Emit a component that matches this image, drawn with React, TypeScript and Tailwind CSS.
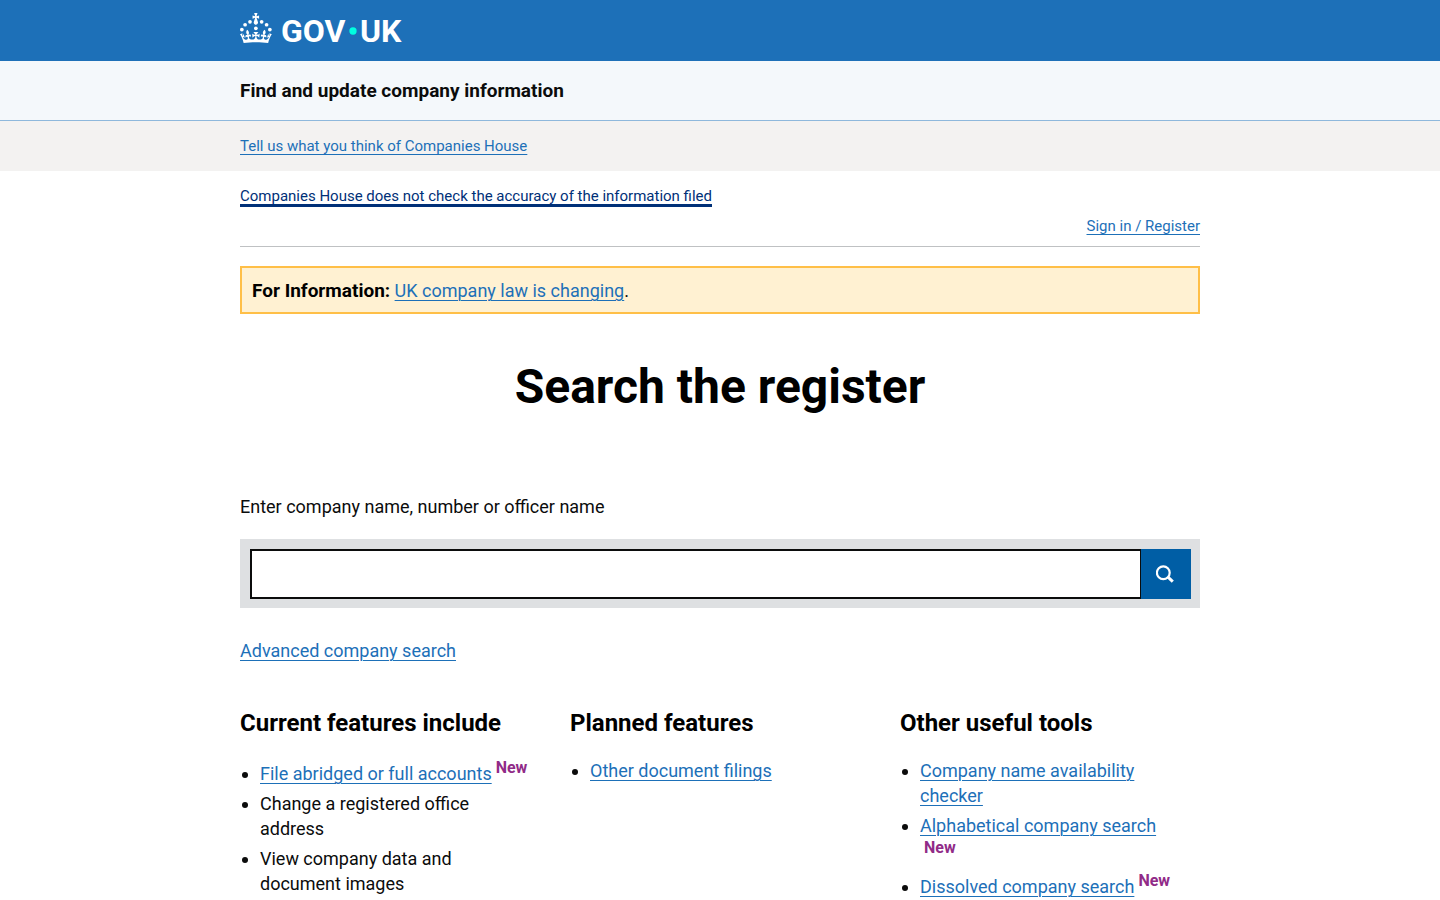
import { useState, type ReactNode } from 'react';

const linkClass = 'text-[#1d70b8] underline decoration-1 underline-offset-3';

const Logo = () => (
  <svg viewBox="0 0 324 60" className="h-[30px] w-[162px] overflow-visible" role="img" aria-label="GOV.UK" fill="white">
    <circle cx="20" cy="17.6" r="3.7" />
    <circle cx="10.2" cy="23.5" r="3.7" />
    <circle cx="3.7" cy="33.2" r="3.7" />
    <circle cx="31.7" cy="30.6" r="3.7" />
    <circle cx="43.3" cy="17.6" r="3.7" />
    <circle cx="53.2" cy="23.5" r="3.7" />
    <circle cx="59.7" cy="33.2" r="3.7" />
    <path d="M33.1,9.8c.2-.1.3-.3.5-.5l4.6,2.4v-6.8l-4.6,1.5c-.1-.2-.3-.3-.5-.5l1.9-5.9h-6.7l1.9,5.9c-.2.1-.3.3-.5.5l-4.6-1.5v6.8l4.6-2.4c.1.2.3.3.5.5l-2.6,8c-.9,2.8,1.2,5.7,4.1,5.7h0c3,0,5.1-2.9,4.1-5.7l-2.6-8ZM37,37.9s-3.4,3.8-4.1,6.1c2.2,0,4.2-.5,6.4-2.8l-.7,8.5c-2-2.8-4.4-4.1-5.7-3.8.1,3.1.5,6.7,5.8,7.2,3.7.3,6.7-1.5,7-3.8.4-2.6-2-4.3-3.7-1.6-1.4-4.5,2.4-6.1,4.9-3.2-1.9-4.5-1.8-7.7,2.4-10.9,3,4,2.6,7.3-1.2,11.1,2.4-1.3,6.2,0,4,4.6-1.2-2.8-3.7-2.2-4.2.2-.3,1.7.7,3.7,3,4.2,1.9.3,4.7-.9,7-5.9-1.3,0-2.4.7-3.9,1.7l2.4-8c.6,2.3,1.4,3.7,2.2,4.5.6-1.6.5-2.8,0-5.3l5,1.8c-2.6,3.6-5.2,8.7-7.3,17.5-7.4-1.1-15.7-1.7-24.5-1.7h0c-8.8,0-17.1.6-24.5,1.7-2.1-8.9-4.7-13.9-7.3-17.5l5-1.8c-.5,2.5-.6,3.7,0,5.3.8-.8,1.6-2.3,2.2-4.5l2.4,8c-1.5-1-2.6-1.7-3.9-1.7,2.3,5,5.2,6.2,7,5.9,2.3-.4,3.3-2.4,3-4.2-.5-2.4-3-3.1-4.2-.2-2.2-4.6,1.6-6,4-4.6-3.7-3.7-4.2-7.1-1.2-11.1,4.2,3.2,4.3,6.4,2.4,10.9,2.5-2.8,6.3-1.3,4.9,3.2-1.8-2.7-4.1-1-3.7,1.6.3,2.3,3.3,4.1,7,3.8,5.4-.5,5.7-4.2,5.8-7.2-1.3-.2-3.7,1-5.7,3.8l-.7-8.5c2.2,2.3,4.2,2.7,6.4,2.8-.7-2.3-4.1-6.1-4.1-6.1h10.6Z" />
    <text x="82" y="58" fontSize="64" fontWeight="700">GOV</text>
    <circle cx="226" cy="36" r="7.3" fill="#00ffe0" />
    <text x="240" y="58" fontSize="64" fontWeight="700">UK</text>
  </svg>
);

const SearchIcon = () => (
  <svg viewBox="0 0 20 20" className="h-5 w-5" fill="none" stroke="white" aria-hidden="true">
    <circle cx="7.3" cy="8.8" r="6.4" strokeWidth="2.2" />
    <path d="M12 13.2L16.8 17.6" strokeWidth="3" />
  </svg>
);

const Container = ({ children }: { children: ReactNode }) => (
  <div className="mx-4 max-w-[960px] sm:mx-8 lg:mx-auto">{children}</div>
);

const NewFlag = () => (
  <span className="mr-1.5 ml-1 inline-block align-[7px] text-base leading-[19px] font-bold text-[#912b88]">New</span>
);

type Feature = {
  label: string;
  linked?: boolean;
  isNew?: boolean;
};

const columns: { title: string; items: Feature[] }[] = [
  {
    title: 'Current features include',
    items: [
      { label: 'File abridged or full accounts', linked: true, isNew: true },
      { label: 'Change a registered office address' },
      { label: 'View company data and document images' },
    ],
  },
  {
    title: 'Planned features',
    items: [{ label: 'Other document filings', linked: true }],
  },
  {
    title: 'Other useful tools',
    items: [
      { label: 'Company name availability checker', linked: true },
      { label: 'Alphabetical company search', linked: true, isNew: true },
      { label: 'Dissolved company search', linked: true, isNew: true },
    ],
  },
];

const FeatureColumn = ({ title, items }: { title: string; items: Feature[] }) => (
  <section>
    <h2 className="mb-5 text-2xl leading-[30px] font-bold text-black">{title}</h2>
    <ul className="list-disc pr-[5px] pl-5">
      {items.map(item => (
        <li key={item.label} className="mb-[5px]">
          {item.linked ? <a href="#" className={linkClass}>{item.label}</a> : item.label}
          {item.isNew && <NewFlag />}
        </li>
      ))}
    </ul>
  </section>
);

export default function App() {
  const [query, setQuery] = useState('');

  return (
    <div className="bg-white font-[Roboto,'Liberation_Sans',sans-serif] text-lg leading-[25px] text-[#0b0c0c]">
      <header>
        <div className="bg-[#1d70b8] pt-[13px] pb-[18px]">
          <Container>
            <a href="#" className="block w-fit"><Logo /></a>
          </Container>
        </div>
        <div className="border-b border-[#8eb8dc] bg-[#f4f8fb] py-[17px]">
          <Container>
            <span className="block text-[19px] leading-[25px] font-bold">Find and update company information</span>
          </Container>
        </div>
      </header>

      <div className="bg-[#f3f2f1] py-[15px] text-[15px] leading-5">
        <Container>
          <a href="#" className={linkClass}>Tell us what you think of Companies House</a>
        </Container>
      </div>

      <Container>
        <div className="border-b border-[#bfc1c3] pt-[15px] pb-[10px] text-[15px] leading-5">
          <a href="#" className="text-[#003078] underline decoration-3 underline-offset-3">
            Companies House does not check the accuracy of the information filed
          </a>
          <div className="mt-[10px] text-right">
            <a href="#" className={linkClass}>Sign in / Register</a>
          </div>
        </div>

        <main>
          <div className="mt-[19px] border-2 border-[#ffbf47] bg-[#fff1d2] px-[10px] pt-[10px] pb-[9px]">
            <strong className="text-[19px] text-black">For Information:</strong>{' '}
            <a href="#" className={linkClass}>UK company law is changing</a>.
          </div>

          <h1 className="mt-12 text-center text-5xl leading-[50px] font-bold text-black">Search the register</h1>

          <form className="mt-[82px]" onSubmit={event => event.preventDefault()}>
            <label htmlFor="search" className="block">Enter company name, number or officer name</label>
            <div className="mt-5 flex bg-[#dee0e2] p-[10px] pr-[9px] pb-[9px]">
              <input
                id="search"
                type="text"
                value={query}
                onChange={event => setQuery(event.target.value)}
                className="h-[50px] min-w-0 flex-1 border-2 border-r border-[#0b0c0c] bg-white px-2 outline-none"
              />
              <button type="submit" aria-label="Search" className="flex h-[50px] w-[50px] items-center justify-center bg-[#005ea5]">
                <SearchIcon />
              </button>
            </div>
          </form>

          <p className="mt-[30px]">
            <a href="#" className={linkClass}>Advanced company search</a>
          </p>

          <div className="mt-[45px] grid gap-x-[30px] md:grid-cols-3">
            {columns.map(column => (
              <FeatureColumn key={column.title} {...column} />
            ))}
          </div>
        </main>
      </Container>
    </div>
  );
}
